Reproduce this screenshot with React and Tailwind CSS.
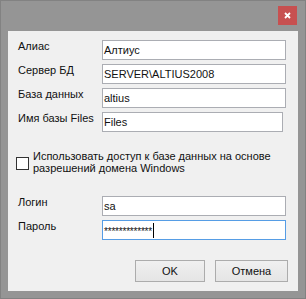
import React from "react";

function Row({ label, value, w = "w-[184px]" }) {
  return (
    <div className="flex items-start h-[20px]">
      <div className="w-[86px] pl-[2px] leading-[13px]">{label}</div>
      <div className={`${w} h-[20px] border border-[#abadb3] bg-white pl-[1px] flex items-center leading-[13px]`}>
        {value}
      </div>
    </div>
  );
}

export default function App() {
  return (
    <div
      className="w-[306px] h-[299px] bg-[#959595] border border-[#828282] flex flex-col text-[11px] text-[#111]"
      style={{ fontFamily: '"Liberation Sans", Arial, sans-serif' }}
    >
      <div className="h-[30px] flex justify-end items-start pt-[5px] pr-[8px]">
        <div className="w-[19px] h-[19px] bg-[#c75050] flex items-center justify-center">
          <svg width="7" height="7" viewBox="0 0 7 7">
            <path d="M1 1 L6 6 M6 1 L1 6" stroke="white" strokeWidth="1.8" />
          </svg>
        </div>
      </div>
      <div className="mx-[7px] h-[260px] bg-[#f0f0f0] flex flex-col pt-[9px] pl-[8px]">
        <div className="flex flex-col gap-[4px]">
          <Row label="Алиас" value="Алтиус" />
          <Row label="Сервер БД" value="SERVER\ALTIUS2008" />
          <Row label="База данных" value="altius" />
          <Row label="Имя базы Files" value="Files" w="w-[181px]" />
        </div>
        <div className="flex items-start mt-[18px]">
          <div className="w-[13px] h-[13px] mt-[7px] border border-[#333] bg-white" />
          <div className="ml-[4px] leading-[12px]">
            Использовать доступ к базе данных на основе
            <br />
            разрешений домена Windows
          </div>
        </div>
        <div className="flex flex-col gap-[4px] mt-[22px]">
          <Row label="Логин" value="sa" />
          <div className="flex items-start h-[20px]">
            <div className="w-[86px] pl-[2px] leading-[13px]">Пароль</div>
            <div className="w-[184px] h-[20px] border border-[#569de5] bg-white pl-[1px] flex items-center">
              <span className="text-[10px] tracking-[-0.2px] leading-[8px] mt-[3px]">*************</span>
              <span className="ml-[1px] w-[1px] h-[15px] bg-black" />
            </div>
          </div>
        </div>
        <div className="flex mt-[20px] pl-[119px] gap-[10px]">
          <div className="w-[70px] h-[22px] border border-[#acacac] bg-gradient-to-b from-[#f0f0f0] to-[#e5e5e5] flex items-center justify-center">
            OK
          </div>
          <div className="w-[73px] h-[22px] border border-[#acacac] bg-gradient-to-b from-[#f0f0f0] to-[#e5e5e5] flex items-center justify-center">
            Отмена
          </div>
        </div>
      </div>
    </div>
  );
}
